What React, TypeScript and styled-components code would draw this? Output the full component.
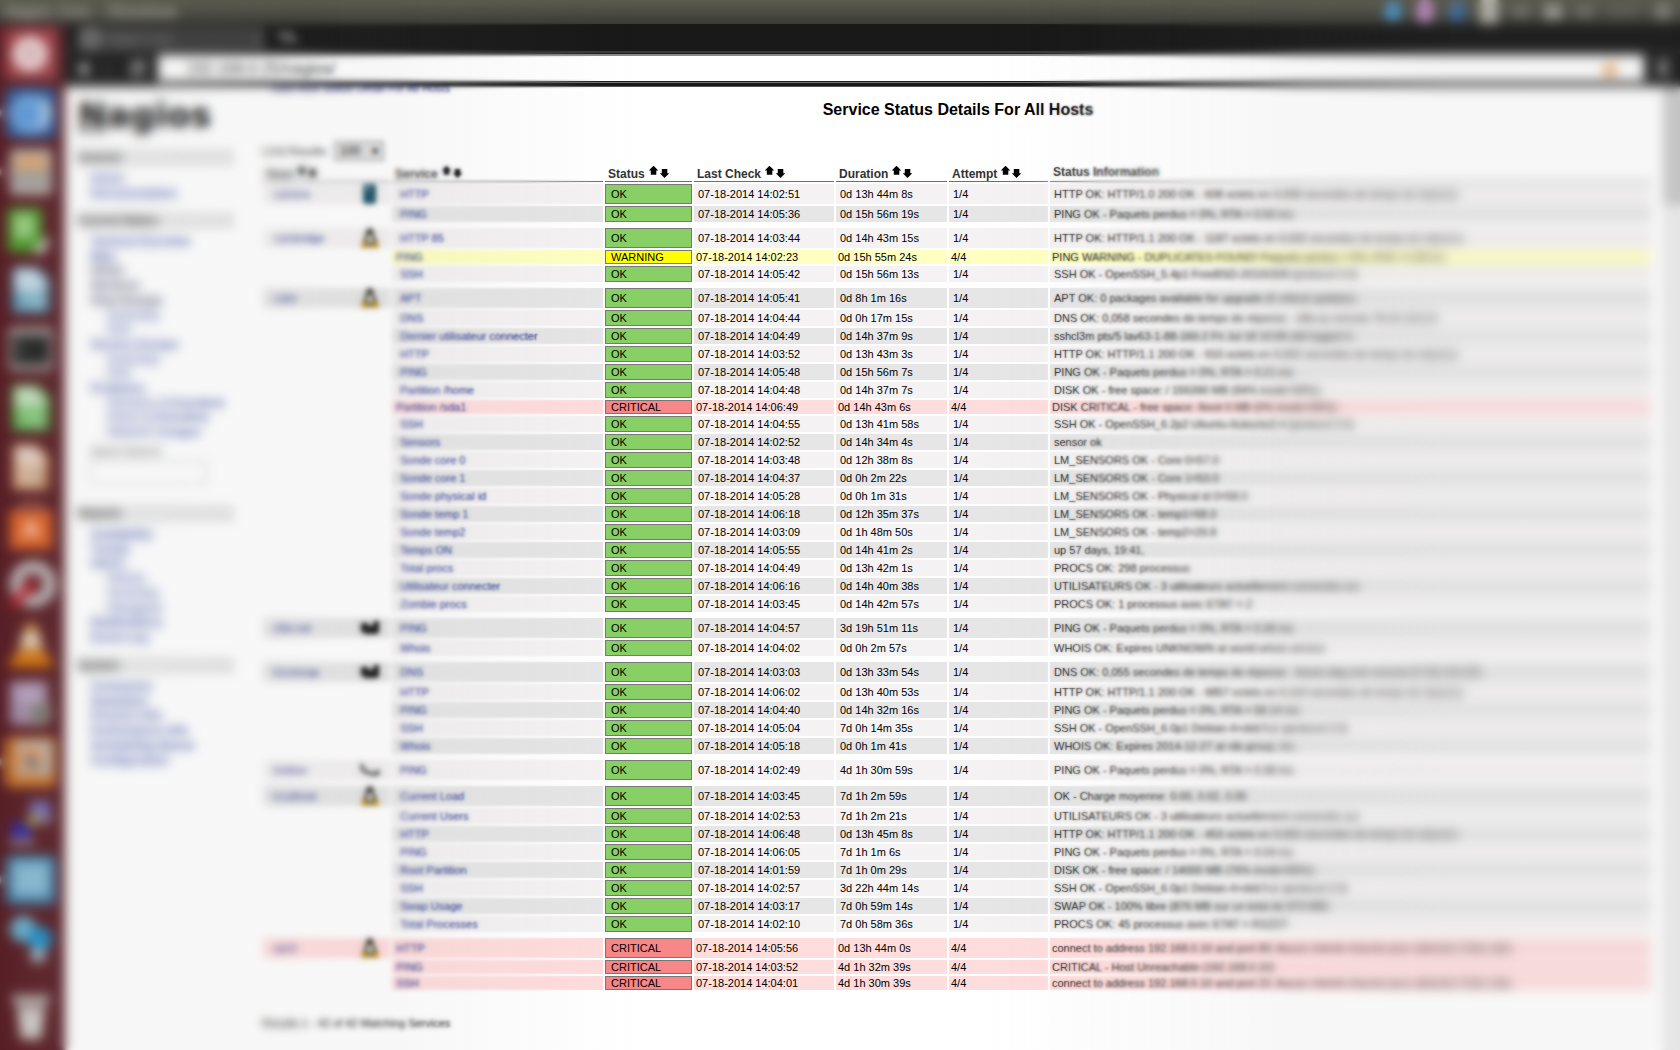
import React from "react";
import styled, { createGlobalStyle, css } from "styled-components";

const Global = createGlobalStyle`
  * { box-sizing: border-box; }
  html, body { margin: 0; padding: 0; }
  body { width: 1680px; height: 1050px; overflow: hidden; background: #fff; }
`;

const Desktop = styled.div`
  position: relative;
  display: flex;
  flex-direction: column;
  width: 1680px;
  height: 1050px;
  overflow: hidden;
  font-family: "Liberation Sans", Arial, sans-serif;
  font-size: 11px;
  color: #000;
`;

const Panel = styled.header`
  display: flex;
  justify-content: space-between;
  align-items: center;
  flex: none;
  height: 24px;
  padding: 0 8px 0 6px;
  background: linear-gradient(#5c5c4c, #4c4c44 50%, #3b3b36);
  color: #b9b7aa;
  font-size: 14px;
`;
const PanelTitle = styled.span`
  font-weight: 700;
  word-spacing: 2px;
`;
const Tray = styled.div`
  display: flex;
  align-items: center;
  gap: 14px;
`;
const TrayIcon = styled.i<{ $c: string; $h?: number; $r?: string }>`
  width: 18px;
  height: ${(p) => p.$h ?? 18}px;
  border-radius: ${(p) => p.$r ?? "50%"};
  background: ${(p) => p.$c};
`;
const Clock = styled.span`
  width: 32px;
  font-size: 12px;
  color: #8f8e86;
`;

const Workspace = styled.div`
  display: flex;
  flex: 1;
  min-height: 0;
`;
const Dock = styled.nav`
  display: flex;
  flex-direction: column;
  gap: 9px;
  flex: none;
  width: 65px;
  padding: 5px 0 9px;
  background: linear-gradient(90deg, #551a21, #5d2228 60%, #59232a);
`;
const DockItem = styled.div<{ $last?: boolean }>`
  display: flex;
  align-items: center;
  height: 50px;
  ${(p) => p.$last && css`margin-top: auto;`}
`;
const Running = styled.i<{ $on?: boolean }>`
  width: 6px;
  border: 4px solid transparent;
  border-left-color: ${(p) => (p.$on ? "#ddd" : "transparent")};
  border-right: 0;
`;
const Glyph = styled.svg`
  display: block;
  width: 50px;
  height: 50px;
`;

const Browser = styled.section`
  display: flex;
  flex-direction: column;
  flex: 1;
  min-width: 0;
`;
const TabStrip = styled.div`
  display: flex;
  align-items: flex-end;
  gap: 14px;
  flex: none;
  height: 27px;
  padding-left: 12px;
  background: #191919;
`;
const Tab = styled.div`
  display: flex;
  align-items: center;
  justify-content: space-between;
  width: 188px;
  height: 25px;
  padding: 0 6px 0 5px;
  border-radius: 5px 5px 0 0;
  background: #3d3d3d;
  color: #8d8d8d;
`;
const TabLabel = styled.span`
  display: flex;
  align-items: center;
  gap: 7px;
  font-size: 12px;
`;
const Favicon = styled.i`
  width: 17px;
  height: 17px;
  border: 4px solid #9b9b9b;
  border-radius: 4px;
`;
const NewTab = styled.i`
  width: 17px;
  height: 12px;
  margin-bottom: 8px;
  border-radius: 2px;
  background: #565656;
  transform: skewX(25deg);
`;
const Toolbar = styled.div`
  display: flex;
  flex: none;
  height: 36px;
  padding: 3px 0 0;
  background: linear-gradient(#3c3c3c 0 2px, #1c1c1c 2px 31px, #777 31px 32px, #191919 32px 35px, #555 35px);
`;
const NavButtons = styled.div`
  display: flex;
  align-items: center;
  justify-content: space-between;
  width: 93px;
  height: 30px;
  padding: 0 12px 0 11px;
`;
const AddressBar = styled.div`
  display: flex;
  align-items: center;
  justify-content: space-between;
  width: 1486px;
  height: 27px;
  padding: 0 24px 0 28px;
  border-top: 2px solid #8b8b8b;
  background: #fff;
  color: #444;
  font-size: 16px;
`;
const Star = styled.svg`
  width: 20px;
  height: 20px;
`;
const MenuButton = styled.i`
  width: 10px;
  height: 16px;
  margin: 6px 0 0 14px;
  background: repeating-linear-gradient(#aaa 0 3px, #555 3px 5px);
`;

const Page = styled.div`
  display: flex;
  flex: 1;
  min-height: 0;
  background: #fff;
`;
const Sidebar = styled.aside`
  display: flex;
  flex-direction: column;
  flex: none;
  width: 175px;
  padding: 12px 6px 0 13px;
`;
const Logo = styled.div`
  height: 41px;
  font: 700 34px/32px "DejaVu Sans", sans-serif;
  letter-spacing: 0.4px;
  color: #000;
`;
const LogoInitial = styled.span`
  text-decoration: underline;
  text-decoration-thickness: 2px;
  text-underline-offset: 3px;
`;
const NavSection = styled.section<{ $h: number }>`
  height: ${(p) => p.$h}px;
  padding-top: 9px;
`;
const NavHeading = styled.h2`
  margin: 0 0 5px;
  height: 17px;
  background: #e6e6e6;
  font-size: 11.5px;
  line-height: 17px;
  color: #111;
`;
const NavLink = styled.a<{ $sub?: boolean; $dark?: boolean }>`
  display: block;
  padding-left: ${(p) => (p.$sub ? 29 : 13)}px;
  font-size: ${(p) => (p.$sub ? 12.2 : 11.8)}px;
  line-height: 14.7px;
  font-weight: ${(p) => (p.$sub ? 400 : 700)};
  color: ${(p) => (p.$dark ? "#2c3252" : "#3045a2")};
  white-space: nowrap;
`;
const SearchLabel = styled.div`
  padding: 5px 0 4px 13px;
  font-size: 11.5px;
  color: #444;
`;
const SearchBox = styled.div`
  width: 118px;
  height: 23px;
  margin-left: 11px;
  border: 1px solid #bbb;
  background: #fff;
`;

const Main = styled.main`
  display: flex;
  flex-direction: column;
  flex: 1;
  min-width: 0;
  padding: 0 9px 0 22px;
`;
const TopLink = styled.a`
  height: 12px;
  padding-left: 8px;
  margin-top: -5px;
  line-height: 12px;
  font-size: 11px;
  color: #142070;
`;
const Title = styled.h1`
  margin: 6px 0 0;
  text-align: center;
  font-size: 16px;
  line-height: 20px;
`;
const Limit = styled.div`
  display: flex;
  align-items: center;
  gap: 6px;
  height: 22px;
  margin-top: 20px;
  font-size: 11px;
  color: #222;
`;
const Select = styled.span`
  display: flex;
  align-items: center;
  justify-content: space-between;
  width: 50px;
  height: 20px;
  padding: 0 5px;
  border: 1px solid #888;
  background: #dedede;
  font-size: 12px;
  color: #000;
`;
const Table = styled.div`
  display: flex;
  flex-direction: column;
  margin: 1px 0 0 1px;
`;
const columns = css`
  display: grid;
  grid-template-columns: 127px 211px 87px 140px 111px 99px 601px;
  column-gap: 2px;
`;
const HeadRow = styled.div`
  ${columns}
  height: 19px;
  margin-bottom: 2px;
`;
const HeadCell = styled.div<{ $up?: boolean }>`
  display: flex;
  align-items: ${(p) => (p.$up ? "flex-start" : "flex-end")};
  gap: 4px;
  padding: ${(p) => (p.$up ? 2 : 0)}px 0 0 3px;
  border-bottom: 1px solid #6f6f6f;
  font-size: 12px;
  line-height: ${(p) => (p.$up ? 15 : 14)}px;
  font-weight: 700;
  color: #333;
`;
const Arrows = styled.svg`
  width: 21px;
  height: 15px;
`;
const Group = styled.div`
  display: flex;
  flex-direction: column;
  gap: 2px;
  margin-bottom: 6px;
`;

type Tone = "odd" | "even" | "warn" | "crit";
const tint: Record<Tone, string> = {
  odd: "#f4f2f2",
  even: "#e6e6e6",
  warn: "#feffc1",
  crit: "#ffdddd",
};
const Row = styled.div<{ $h: number }>`
  ${columns}
  height: ${(p) => p.$h}px;
`;
const Cell = styled.div<{ $tone: Tone; $link?: boolean; $info?: boolean }>`
  display: flex;
  align-items: center;
  min-width: 0;
  padding-left: ${(p) =>
    (p.$tone === "odd" || p.$tone === "even" ? 4 : 2) * (p.$link ? 2 : 1)}px;
  background: ${(p) => tint[p.$tone]};
  color: ${(p) => (p.$link ? "#14268a" : p.$info ? "#1a1a1a" : "#000")};
  white-space: nowrap;
`;
const HostCell = styled(Cell)`
  justify-content: space-between;
  padding: 0 10px 0 10px;
`;
const Badge = styled.div<{ $s: string }>`
  display: flex;
  align-items: center;
  padding-left: 5px;
  border: 1px solid #777;
  background: ${(p) => (p.$s === "OK" ? "#88d066" : p.$s === "WARNING" ? "#ffff00" : "#f88888")};
`;
const HostIcon = styled.svg`
  width: 20px;
  height: 20px;
`;
const Results = styled.div`
  margin-top: 21px;
  font-size: 11px;
  color: #000;
`;
const Scrollbar = styled.div`
  flex: none;
  width: 17px;
  background: #ececec;
`;
const Thumb = styled.div`
  height: 118px;
  background: #c9c9c9;
`;

/* Depth-of-field lens: each layer softens a band further from the focus column. */
const Lens = styled.div<{ $blur: number; $l: [number, number]; $r: [number, number] }>`
  position: absolute;
  inset: 0;
  pointer-events: none;
  backdrop-filter: blur(${(p) => p.$blur}px);
  mask-image: linear-gradient(
    90deg,
    #000 ${(p) => p.$l[0]}px,
    transparent ${(p) => p.$l[1]}px,
    transparent ${(p) => p.$r[0]}px,
    #000 ${(p) => p.$r[1]}px
  );
`;
const Haze = styled.div`
  position: absolute;
  inset: 0;
  pointer-events: none;
  background: linear-gradient(
    90deg,
    rgba(128, 128, 128, 0.06) 400px,
    rgba(128, 128, 128, 0) 640px,
    rgba(128, 128, 128, 0) 980px,
    rgba(128, 128, 128, 0.06) 1280px
  );
`;

const Sort = () => (
  <Arrows viewBox="0 0 21 15">
    <path d="M4.5 -.3 L9.3 4.5 H7.3 V8.7 H1.8 V4.5 H-.2 Z" />
    <path d="M15.5 12 L20.3 7.2 H18.3 V3 H12.8 V7.2 H10.8 Z" />
  </Arrows>
);

const hostArt: Record<string, React.ReactNode> = {
  tower: (
    <>
      <rect x="3" y="0" width="13" height="20" rx="3" fill="#164f64" />
      <rect x="5" y="1" width="5" height="6" fill="#5c8592" />
    </>
  ),
  tux: (
    <>
      <path d="M10 0c4 0 3 5 5 9s3 6 1 9H4c-2-3 0-6 1-9s1-9 5-9z" fill="#2c291b" />
      <ellipse cx="10" cy="11" rx="3" ry="4.5" fill="#ddd" />
      <path d="M1 15l5-2 3 7H2zM19 15l-5-2-3 7h7z" fill="#c08f10" />
    </>
  ),
  router: (
    <>
      <path d="M1 5h7v9H1zM10 9l4-3V3h5v12h-6z" fill="#000" />
      <rect x="4" y="8" width="13" height="8" fill="#111" />
    </>
  ),
  box: <path d="M1 4l2 6q5 4 14 4l2-4" fill="none" stroke="#555" strokeWidth="4" />,
};

const doc = (c: string, inner: React.ReactNode) => (
  <>
    <path d="M6 2h26l12 12v34H6z" fill={c} />
    <path d="M9 4h20l11 12v10H9z" fill="#fff" opacity=".7" />
    {inner}
  </>
);

const dockArt: { on?: boolean; art: React.ReactNode }[] = [
  { art: <><rect width="50" height="50" rx="5" fill="#a5454c" /><circle cx="24" cy="25" r="13" fill="none" stroke="#f1dcdc" strokeWidth="9" /><circle cx="24" cy="25" r="9" fill="#d9b6b8" /></> },
  { on: true, art: <><rect width="50" height="50" rx="6" fill="#325f9e" /><circle cx="24" cy="26" r="20" fill="#6ea6dc" /><circle cx="21" cy="27" r="9" fill="#5a96d8" /><path d="M37 12q10 14-2 28" stroke="#cfe2f4" strokeWidth="6" fill="none" /></> },
  { on: true, art: <><rect x="4" y="2" width="42" height="46" rx="4" fill="#b5aea8" /><rect x="9" y="10" width="32" height="12" fill="#dfa56a" /><path d="M8 27h34M8 36h34" stroke="#888" strokeWidth="3" /></> },
  { art: <><rect x="2" y="2" width="34" height="44" rx="4" fill="#4d9c2b" /><rect x="8" y="8" width="20" height="24" fill="#9ccf84" /><path d="M30 40l4 5 8-12" stroke="#ddd" strokeWidth="6" fill="none" /></> },
  { art: doc("#4b87a8", <><rect x="12" y="26" width="26" height="18" fill="#82b4c8" /><path d="M30 42l8-8" stroke="#c6dce5" strokeWidth="4" /></>) },
  { art: <><rect x="3" y="3" width="44" height="44" rx="4" fill="#9a9592" /><rect x="7" y="12" width="36" height="28" fill="#242424" /><path d="M12 20l6 5-6 5" stroke="#777" strokeWidth="2" fill="none" /></> },
  { art: doc("#4d9c3e", <><rect x="12" y="22" width="26" height="22" fill="#86c97a" /><path d="M30 44l8-12" stroke="#bcb" strokeWidth="4" /></>) },
  { art: doc("#a2633c", <><rect x="9" y="22" width="29" height="24" fill="#dfb79a" /><circle cx="28" cy="34" r="6" fill="#b8b09a" /></>) },
  { art: <><path d="M4 10h42v38H4z" fill="#df6428" /><path d="M12 10q13-14 26 0" stroke="#a2625a" strokeWidth="5" fill="none" /><path d="M18 36l7-16 7 16M21 31h8" stroke="#fccdb4" strokeWidth="4" fill="none" /></> },
  { art: <><circle cx="27" cy="24" r="17" fill="none" stroke="#c2bebe" strokeWidth="12" /><path d="M6 46l22-24" stroke="#b81f29" strokeWidth="9" /></> },
  { art: <><path d="M20 4h10l10 34H10z" fill="#c98a48" /><path d="M18 14h14l4 13H14z" fill="#e8d8c8" /><path d="M7 36h36l4 12H3z" fill="#d87608" /></> },
  { art: <><rect x="4" y="3" width="38" height="44" rx="4" fill="#a48caa" /><rect x="10" y="8" width="24" height="16" fill="#b8a4c0" /><circle cx="34" cy="35" r="10" fill="#77756e" stroke="#a4a09a" strokeWidth="3" /></> },
  { on: true, art: <><rect width="50" height="50" rx="5" fill="#cf7a2c" /><rect x="11" y="4" width="34" height="34" fill="#a9b8c8" /><circle cx="26" cy="22" r="13" fill="#ee9b55" /><path d="M22 14l14 16H20z" fill="#587092" /></> },
  { art: <><rect x="24" y="5" width="20" height="16" fill="#7470bd" /><rect x="5" y="27" width="20" height="15" fill="#3028a8" /><path d="M18 28l14-14-3 17z" fill="#b0ae10" /><path d="M4 46h24M26 24h20" stroke="#a7a0a8" strokeWidth="5" /></> },
  { on: true, art: <><rect width="50" height="50" rx="5" fill="#3b759d" /><rect x="6" y="6" width="38" height="36" rx="2" fill="#83b8d2" /><path d="M14 28l7-5 6 5 9-12" stroke="#94c4da" strokeWidth="3" fill="none" /></> },
  { art: <><circle cx="17" cy="15" r="13" fill="#69b0ce" /><circle cx="34" cy="25" r="12" fill="#1f93ca" /><circle cx="32" cy="41" r="8" fill="#a2b6bd" /></> },
];

type Svc = [string, string, string, string, string, Tone?];
interface Host { name: string; icon: string; tone: Tone; rows: Svc[] }

const D = "07-18-2014 ";
const hosts: Host[] = [
  { name: "camera", icon: "tower", tone: "odd", rows: [
    ["HTTP", "OK", "14:02:51", "0d 13h 44m 8s", "HTTP OK: HTTP/1.0 200 OK - 608 octets en 0,008 secondes de temps de réponse", "odd"],
    ["PING", "OK", "14:05:36", "0d 15h 56m 19s", "PING OK - Paquets perdus = 0%, RTA = 0.50 ms", "even"],
  ]},
  { name: "cambridge", icon: "tux", tone: "odd", rows: [
    ["HTTP 85", "OK", "14:03:44", "0d 14h 43m 15s", "HTTP OK: HTTP/1.1 200 OK - 1187 octets en 0,005 secondes de temps de réponse", "odd"],
    ["PING", "WARNING", "14:02:23", "0d 15h 55m 24s", "PING WARNING - DUPLICATES FOUND! Paquets perdus = 0%, RTA = 0.38 ms", "warn"],
    ["SSH", "OK", "14:05:42", "0d 15h 56m 13s", "SSH OK - OpenSSH_5.4p1 FreeBSD-20100308 (protocol 2.0)", "odd"],
  ]},
  { name: "cube", icon: "tux", tone: "even", rows: [
    ["APT", "OK", "14:05:41", "0d 8h 1m 16s", "APT OK: 0 packages available for upgrade (0 critical updates).", "even"],
    ["DNS", "OK", "14:04:44", "0d 0h 17m 15s", "DNS OK: 0,058 secondes de temps de réponse . cfile.eu renvoie 78.23.123.24", "odd"],
    ["Dernier utilisateur connecter", "OK", "14:04:49", "0d 14h 37m 9s", "sshcl3m pts/5 lav63-1-88-160-2 Fri Jul 18 10:08 still logged in", "even"],
    ["HTTP", "OK", "14:03:52", "0d 13h 43m 3s", "HTTP OK: HTTP/1.1 200 OK - 910 octets en 0,002 secondes de temps de réponse", "odd"],
    ["PING", "OK", "14:05:48", "0d 15h 56m 7s", "PING OK - Paquets perdus = 0%, RTA = 0.21 ms", "even"],
    ["Partition /home", "OK", "14:04:48", "0d 14h 37m 7s", "DISK OK - free space: / 155390 MB (84% inode=99%);", "odd"],
    ["Partition /sda1", "CRITICAL", "14:06:49", "0d 14h 43m 6s", "DISK CRITICAL - free space: /boot 0 MB (0% inode=99%);", "crit"],
    ["SSH", "OK", "14:04:55", "0d 13h 41m 58s", "SSH OK - OpenSSH_6.2p2 Ubuntu-6ubuntu0.4 (protocol 2.0)", "odd"],
    ["Sensors", "OK", "14:02:52", "0d 14h 34m 4s", "sensor ok", "even"],
    ["Sonde core 0", "OK", "14:03:48", "0d 12h 38m 8s", "LM_SENSORS OK - Core 0=57.0", "odd"],
    ["Sonde core 1", "OK", "14:04:37", "0d 0h 2m 22s", "LM_SENSORS OK - Core 1=53.0", "even"],
    ["Sonde physical id", "OK", "14:05:28", "0d 0h 1m 31s", "LM_SENSORS OK - Physical id 0=58.0", "odd"],
    ["Sonde temp 1", "OK", "14:06:18", "0d 12h 35m 37s", "LM_SENSORS OK - temp1=58.0", "even"],
    ["Sonde temp2", "OK", "14:03:09", "0d 1h 48m 50s", "LM_SENSORS OK - temp2=29.8", "odd"],
    ["Temps ON", "OK", "14:05:55", "0d 14h 41m 2s", "up 57 days, 19:41,", "even"],
    ["Total procs", "OK", "14:04:49", "0d 13h 42m 1s", "PROCS OK: 298 processus", "odd"],
    ["Utilisateur connecter", "OK", "14:06:16", "0d 14h 40m 38s", "UTILISATEURS OK - 3 utilisateurs actuellement connectés sur", "even"],
    ["Zombie procs", "OK", "14:03:45", "0d 14h 42m 57s", "PROCS OK: 1 processus avec ETAT = Z", "odd"],
  ]},
  { name: "cfile.net", icon: "router", tone: "even", rows: [
    ["PING", "OK", "14:04:57", "3d 19h 51m 11s", "PING OK - Paquets perdus = 0%, RTA = 0.36 ms", "even"],
    ["Whois", "OK", "14:04:02", "0d 0h 2m 57s", "WHOIS OK: Expires UNKNOWN at world whois service", "odd"],
  ]},
  { name: "forumcap", icon: "router", tone: "even", rows: [
    ["DNS", "OK", "14:03:03", "0d 13h 33m 54s", "DNS OK: 0,055 secondes de temps de réponse . forum.mtg.com renvoie 87.98.145.205", "even"],
    ["HTTP", "OK", "14:06:02", "0d 13h 40m 53s", "HTTP OK: HTTP/1.1 200 OK - 9857 octets en 0,110 secondes de temps de réponse", "odd"],
    ["PING", "OK", "14:04:40", "0d 14h 32m 16s", "PING OK - Paquets perdus = 0%, RTA = 58.14 ms", "even"],
    ["SSH", "OK", "14:05:04", "7d 0h 14m 35s", "SSH OK - OpenSSH_6.0p1 Debian-4+deb7u1 (protocol 2.0)", "odd"],
    ["Whois", "OK", "14:05:18", "0d 0h 1m 41s", "WHOIS OK: Expires 2014-12-27 at ntk-group, inc.", "even"],
  ]},
  { name: "livebox", icon: "box", tone: "odd", rows: [
    ["PING", "OK", "14:02:49", "4d 1h 30m 59s", "PING OK - Paquets perdus = 0%, RTA = 0.38 ms", "odd"],
  ]},
  { name: "localhost", icon: "tux", tone: "even", rows: [
    ["Current Load", "OK", "14:03:45", "7d 1h 2m 59s", "OK - Charge moyenne: 0.00, 0.02, 0.05", "even"],
    ["Current Users", "OK", "14:02:53", "7d 1h 2m 21s", "UTILISATEURS OK - 3 utilisateurs actuellement connectés sur", "odd"],
    ["HTTP", "OK", "14:06:48", "0d 13h 45m 8s", "HTTP OK: HTTP/1.1 200 OK - 453 octets en 0,002 secondes de temps de réponse", "even"],
    ["PING", "OK", "14:06:05", "7d 1h 1m 6s", "PING OK - Paquets perdus = 0%, RTA = 0.04 ms", "odd"],
    ["Root Partition", "OK", "14:01:59", "7d 1h 0m 29s", "DISK OK - free space: / 14000 MB (76% inode=85%);", "even"],
    ["SSH", "OK", "14:02:57", "3d 22h 44m 14s", "SSH OK - OpenSSH_6.0p1 Debian-4+deb7u1 (protocol 2.0)", "odd"],
    ["Swap Usage", "OK", "14:03:17", "7d 0h 59m 14s", "SWAP OK - 100% libre (876 MB sur un total de 879 MB)", "even"],
    ["Total Processes", "OK", "14:02:10", "7d 0h 58m 36s", "PROCS OK: 45 processus avec ETAT = RSZDT", "odd"],
  ]},
  { name: "vpn2", icon: "tux", tone: "crit", rows: [
    ["HTTP", "CRITICAL", "14:05:56", "0d 13h 44m 0s", "connect to address 192.168.0.10 and port 80: Aucun chemin d'accès pour atteindre l'hôte cible", "crit"],
    ["PING", "CRITICAL", "14:03:52", "4d 1h 32m 39s", "CRITICAL - Host Unreachable (192.168.0.10)", "crit"],
    ["SSH", "CRITICAL", "14:04:01", "4d 1h 30m 39s", "connect to address 192.168.0.10 and port 22: Aucun chemin d'accès pour atteindre l'hôte cible", "crit"],
  ]},
];

type Link = [string, ("sub" | "dark")?];
const nav: { title: string; h: number; links: Link[]; search?: boolean }[] = [
  { title: "General", h: 63, links: [["Home"], ["Documentation"]] },
  { title: "Current Status", h: 293, search: true, links: [
    ["Tactical Overview"], ["Map"], ["Hosts", "dark"], ["Services", "dark"], ["Host Groups", "dark"],
    ["Summary", "sub"], ["Grid", "sub"], ["Service Groups"], ["Summary", "sub"], ["Grid", "sub"],
    ["Problems"], ["Services (Unhandled)", "sub"], ["Hosts (Unhandled)", "sub"], ["Network Outages", "sub"],
  ]},
  { title: "Reports", h: 152, links: [
    ["Availability"], ["Trends"], ["Alerts"], ["History", "sub"], ["Summary", "sub"], ["Histogram", "sub"],
    ["Notifications"], ["Event Log"],
  ]},
  { title: "System", h: 130, links: [
    ["Comments"], ["Downtime"], ["Process Info"], ["Performance Info"], ["Scheduling Queue"], ["Configuration"],
  ]},
];

const heads = ["Host", "Service", "Status", "Last Check", "Duration", "Attempt"];

function HostRows({ host }: { host: Host }) {
  return (
    <Group>
      {host.rows.map(([svc, status, time, dur, info, tone = "odd"], i) => (
        <Row key={i} $h={i === 0 ? 20 : status === "OK" ? 16 : 14}>
          {i === 0 ? (
            <HostCell $tone={host.tone} $link>
              {host.name}
              <HostIcon viewBox="0 0 20 20">{hostArt[host.icon]}</HostIcon>
            </HostCell>
          ) : (
            <span />
          )}
          <Cell $tone={tone} $link>{svc}</Cell>
          <Badge $s={status}>{status}</Badge>
          <Cell $tone={tone}>{D + time}</Cell>
          <Cell $tone={tone}>{dur}</Cell>
          <Cell $tone={tone}>{status === "OK" ? "1/4" : "4/4"}</Cell>
          <Cell $tone={tone} $info>{info}</Cell>
        </Row>
      ))}
    </Group>
  );
}

export default function App() {
  return (
    <>
      <Global />
      <Desktop>
        <Panel>
          <PanelTitle>Nagios Core - Chromium</PanelTitle>
          <Tray>
            <TrayIcon $c="#4a95c9" />
            <TrayIcon $c="#bd8bc0" $h={22} />
            <TrayIcon $c="linear-gradient(135deg,#778,#2f6cb0 55%)" />
            <TrayIcon $c="#b5b3aa" $h={24} $r="3px" />
            <TrayIcon $c="#77766d" $h={10} $r="2px" />
            <TrayIcon $c="#a5a49b" $h={13} $r="3px" />
            <TrayIcon $c="#77766d" $h={10} $r="3px" />
            <Clock>14:07</Clock>
            <TrayIcon $c="#89887f" $h={14} />
          </Tray>
        </Panel>
        <Workspace>
          <Dock>
            {dockArt.map((d, i) => (
              <DockItem key={i}>
                <Running $on={d.on} />
                <Glyph viewBox="0 0 50 50">{d.art}</Glyph>
              </DockItem>
            ))}
            <DockItem $last>
              <Running />
              <Glyph viewBox="0 0 50 50">
                <path d="M5 4h40l-4 11H9z" fill="#b4adaa" />
                <path d="M11 17h28l-4 31H15z" fill="#d0cdc9" />
              </Glyph>
            </DockItem>
          </Dock>
          <Browser>
            <TabStrip>
              <Tab>
                <TabLabel><Favicon />Nagios Core</TabLabel>
                <span>×</span>
              </Tab>
              <NewTab />
            </TabStrip>
            <Toolbar>
              <NavButtons>
                <svg width="13" height="14" viewBox="0 0 13 14"><path d="M12 0v14L0 7z" fill="#ddd" /></svg>
                <svg width="10" height="14" viewBox="0 0 10 14"><path d="M0 0v14l10-7z" fill="#383838" /></svg>
                <svg width="18" height="18" viewBox="0 0 18 18"><path d="M14 5a6 6 0 1 0 1 6M15 1v6h-6" fill="none" stroke="#ccc" strokeWidth="3" /></svg>
              </NavButtons>
              <AddressBar>
                <span>192.168.0.25/nagios/</span>
                <Star viewBox="0 0 20 20"><path d="M10 1l3 6 6 1-4 5 1 6-6-3-6 3 1-6-4-5 6-1z" fill="#eaa468" /></Star>
              </AddressBar>
              <MenuButton />
            </Toolbar>
            <Page>
              <Sidebar>
                <Logo><LogoInitial>N</LogoInitial>agios</Logo>
                {nav.map((s) => (
                  <NavSection key={s.title} $h={s.h}>
                    <NavHeading>{s.title}</NavHeading>
                    {s.links.map(([t, k], i) => (
                      <NavLink key={i} $sub={k === "sub"} $dark={k === "dark"}>{t}</NavLink>
                    ))}
                    {s.search && (
                      <>
                        <SearchLabel>Quick Search:</SearchLabel>
                        <SearchBox />
                      </>
                    )}
                  </NavSection>
                ))}
              </Sidebar>
              <Main>
                <TopLink>View Host Status Detail For All Hosts</TopLink>
                <Title>Service Status Details For All Hosts</Title>
                <Limit>Limit Results: <Select>100<span>▾</span></Select></Limit>
                <Table>
                  <HeadRow>
                    {heads.map((h) => (
                      <HeadCell key={h}>{h}<Sort /></HeadCell>
                    ))}
                    <HeadCell $up>Status Information</HeadCell>
                  </HeadRow>
                  {hosts.map((h) => (
                    <HostRows key={h.name} host={h} />
                  ))}
                </Table>
                <Results>Results 1 - 42 of 42 Matching Services</Results>
              </Main>
              <Scrollbar><Thumb /></Scrollbar>
            </Page>
          </Browser>
        </Workspace>
        <Lens $blur={1.1} $l={[520, 600]} $r={[1030, 1100]} />
        <Lens $blur={2} $l={[400, 520]} $r={[1080, 1190]} />
        <Lens $blur={3} $l={[280, 420]} $r={[1170, 1300]} />
        <Lens $blur={4.2} $l={[150, 340]} $r={[1250, 1450]} />
        <Haze />
      </Desktop>
    </>
  );
}
